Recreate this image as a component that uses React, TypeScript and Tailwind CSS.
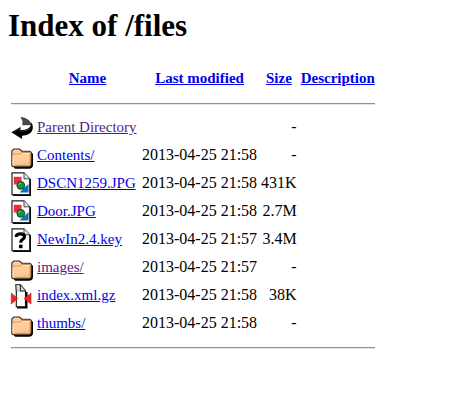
import type { ReactNode } from "react";

type Kind = "back" | "folder" | "image" | "unknown" | "compressed";

interface Entry {
  kind: Kind;
  name: string;
  modified: string;
  size: string;
  visited?: boolean;
}

const entries: Entry[] = [
  { kind: "back", name: "Parent Directory", modified: "", size: "-", visited: true },
  { kind: "folder", name: "Contents/", modified: "2013-04-25 21:58", size: "-" },
  { kind: "image", name: "DSCN1259.JPG", modified: "2013-04-25 21:58", size: "431K" },
  { kind: "image", name: "Door.JPG", modified: "2013-04-25 21:58", size: "2.7M" },
  { kind: "unknown", name: "NewIn2.4.key", modified: "2013-04-25 21:57", size: "3.4M" },
  { kind: "folder", name: "images/", modified: "2013-04-25 21:57", size: "-", visited: true },
  { kind: "compressed", name: "index.xml.gz", modified: "2013-04-25 21:58", size: "38K" },
  { kind: "folder", name: "thumbs/", modified: "2013-04-25 21:58", size: "-" },
];

const page = (
  <>
    <path d="M2 23.3H19.3V7" fill="none" stroke="#000" strokeWidth="1.4" />
    <path d="M1 .8H13L18.7 6.8V22.7H1Z" fill="#fff" stroke="#222" strokeWidth="1.2" />
    <path d="M13 .8V6.8H18.7" fill="#e4e4e4" stroke="#444" strokeWidth="1" />
  </>
);

const drawings: Record<Kind, ReactNode> = {
  back: (
    <>
      <path d="M9.5 1C15 1.2 19.5 4.5 21 9L11.5 9.3V5Z" fill="#3c3c3c" />
      <path d="M12 2.5V8.5M14 3V8.5M16 4V8.5M18 6V8.5" stroke="#6c6c6c" strokeWidth=".6" />
      <path d="M20.5 6.5C23.5 12 22 19 11 19.8V23L.3 16.3L9.5 11V14C16 14 19.5 12.5 20.5 6.5Z" fill="#000" />
      <path d="M2.5 16L9 12.5V15.3C14 15.4 18 14.2 20 11.5" fill="none" stroke="#4c4c4c" strokeWidth=".7" />
    </>
  ),
  folder: (
    <>
      <path d="M2 21.5L4 24.7H18.5Q22 24.3 22 21V10L20 8V22Z" fill="#000" />
      <path d="M.8 9.5V7L2.8 5H8.5L10.8 7.2H18.2Q20 7.2 20.2 9V20Q20 22.8 18 22.8H3Q.8 22.8 .8 20.5Z" fill="#ffcc99" stroke="#3a291c" strokeWidth="1.1" />
      <path d="M1.5 9L3 10.3H9L11 8.6H18.8" fill="none" stroke="#b07c4d" strokeWidth=".8" />
      <path d="M2 12V20.5M3 11.3H9.5L11.5 9.6H18" fill="none" stroke="#ffe6cc" strokeWidth="1" />
      <path d="M3.5 21.4H18L19 20V10.5" fill="none" stroke="#d59a62" strokeWidth="1.2" />
      <path d="M9 18.5H18M6 20H18" stroke="#dca16a" strokeWidth=".8" strokeDasharray="1 1.5" />
    </>
  ),
  image: (
    <>
      {page}
      <path d="M2.8 4.8H10.5V12.5H2.8Z" fill="#f22b36" />
      <path d="M17.5 12V20.5H8.5Z" fill="#126fb3" />
      <circle cx="9.8" cy="13.4" r="3.9" fill="#159447" stroke="#064b1f" strokeWidth="1" />
      <path d="M7.8 12.8Q8.2 11.2 9.8 11.2" fill="none" stroke="#8bdc96" strokeWidth="1" />
    </>
  ),
  unknown: (
    <>
      {page}
      <path d="M5.3 9V7.8Q6.3 5.8 9.3 5.8Q13.5 5.8 13.5 8.5Q13.5 10.4 11.3 11.6Q9.7 12.5 9.7 14.8" fill="none" stroke="#000" strokeWidth="3.2" />
      <path d="M8 16.7H11.5V20.2H8Z" fill="#000" />
    </>
  ),
  compressed: (
    <>
      <path d="M6 23.5H15.5V8" fill="none" stroke="#000" strokeWidth="2" />
      <path d="M4.8 .8H9.5L14.5 7V22.7H5.3V8Z" fill="#fff" stroke="#111" strokeWidth="1.1" />
      <path d="M9.3 1V7H14.3" fill="#ddd" stroke="#111" strokeWidth="1.1" />
      <path d="M7 2.5V8" fill="none" stroke="#aaa" strokeWidth="1" />
      <path d="M.3 9.2L6.8 14.5L.3 20ZM20 9.2L13 14.5L20 20Z" fill="#ee2525" stroke="#bd1717" strokeWidth=".6" />
    </>
  ),
};

function Icon({ kind }: { kind: Kind }) {
  return (
    <svg className="block h-6 w-[22px] overflow-visible" viewBox="0 0 22 24" aria-hidden="true">
      {drawings[kind]}
    </svg>
  );
}

function Rule() {
  return (
    <tr>
      <td colSpan={5} className="p-px">
        <hr className="my-[7px] h-0.5 border-t border-b border-t-[#929292] border-b-[#e4e4e4]" />
      </td>
    </tr>
  );
}

const headings = ["Name", "Last modified", "Size", "Description"];

export default function App() {
  return (
    <main className="min-h-screen bg-white px-2 pt-2 pb-4 font-['Liberation_Serif',serif] text-[15px] leading-[22px] text-black">
      <h1 className="mb-5 text-[31px] leading-9 font-bold">Index of /files</h1>
      <table className="border-separate border-spacing-[2px]">
        <thead>
          <tr className="h-[27px] align-top">
            <td className="p-px" />
            {headings.map((heading) => (
              <th key={heading} scope="col" className="p-px font-bold whitespace-nowrap">
                <a href="#" className="text-[#0000ee] underline">{heading}</a>
              </th>
            ))}
          </tr>
        </thead>
        <tbody>
          <Rule />
          {entries.map((entry) => (
            <tr key={entry.name} className="align-top">
              <td className="p-px"><Icon kind={entry.kind} /></td>
              <td className="min-w-[103px] p-px whitespace-nowrap">
                <a href="#" className={entry.visited ? "text-[#551a8b] underline" : "text-[#0000ee] underline"}>
                  {entry.name}
                </a>
              </td>
              <td className="p-px text-right text-base leading-[22px] whitespace-nowrap">{entry.modified}</td>
              <td className="p-px text-right text-base leading-[22px] whitespace-nowrap">{entry.size}</td>
              <td className="p-px" />
            </tr>
          ))}
          <Rule />
        </tbody>
      </table>
    </main>
  );
}
